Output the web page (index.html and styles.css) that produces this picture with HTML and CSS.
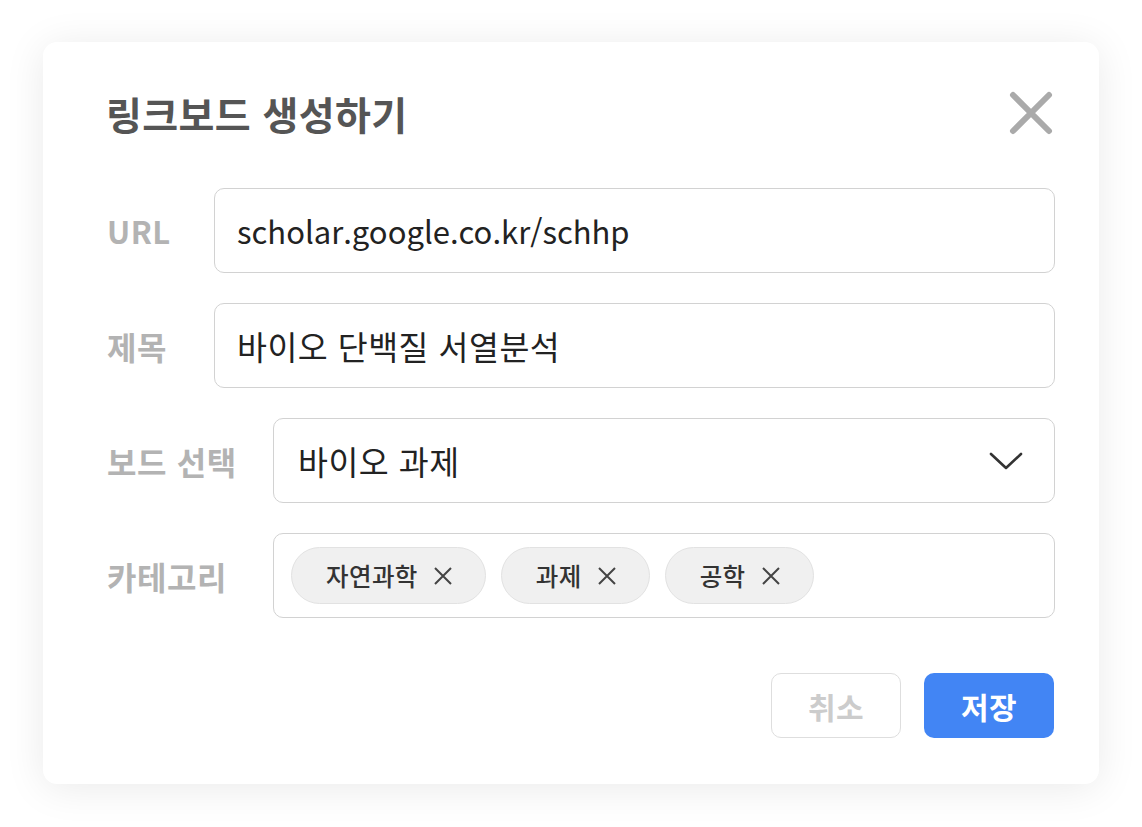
FILE: index.html
```html
<!DOCTYPE html>
<html lang="ko">
<head>
<meta charset="utf-8">
<title>링크보드 생성하기</title>
<link rel="stylesheet" href="styles.css">
</head>
<body>
<div class="stage">
  <div class="card">
    <div class="header">
      <h1 class="title">링크보드 생성하기</h1>
      <button class="close" aria-label="닫기">
        <svg width="44" height="44" viewBox="0 0 44 44"><path d="M4 4 L40 40 M40 4 L4 40" stroke="#aaaaaa" stroke-width="6" stroke-linecap="round" fill="none"/></svg>
      </button>
    </div>
    <div class="form">
      <div class="row">
        <div class="label label-short label-latin">URL</div>
        <div class="field field-latin">scholar.google.co.kr/schhp</div>
      </div>
      <div class="row">
        <div class="label label-short">제목</div>
        <div class="field">바이오 단백질 서열분석</div>
      </div>
      <div class="row">
        <div class="label label-long">보드 선택</div>
        <div class="field field-select">
          <span>바이오 과제</span>
          <svg class="chev" width="34" height="20" viewBox="0 0 34 20"><path d="M2 3 L17 17 L32 3" stroke="#333" stroke-width="2.6" fill="none" stroke-linecap="round" stroke-linejoin="round"/></svg>
        </div>
      </div>
      <div class="row">
        <div class="label label-long">카테고리</div>
        <div class="field field-tags">
          <span class="tag">자연과학<svg width="20" height="20" viewBox="0 0 20 20"><path d="M2 2 L18 18 M18 2 L2 18" stroke="#444" stroke-width="2" fill="none"/></svg></span>
          <span class="tag">과제<svg width="20" height="20" viewBox="0 0 20 20"><path d="M2 2 L18 18 M18 2 L2 18" stroke="#444" stroke-width="2" fill="none"/></svg></span>
          <span class="tag">공학<svg width="20" height="20" viewBox="0 0 20 20"><path d="M2 2 L18 18 M18 2 L2 18" stroke="#444" stroke-width="2" fill="none"/></svg></span>
        </div>
      </div>
    </div>
    <div class="actions">
      <button class="btn btn-cancel">취소</button>
      <button class="btn btn-save">저장</button>
    </div>
  </div>
</div>
</body>
</html>
```
FILE: styles.css
```css
* { box-sizing: border-box; }
html, body { margin: 0; padding: 0; background: #ffffff; }
body {
  font-family: "Noto Sans CJK KR", "Noto Sans", sans-serif;
  width: 1142px;
  height: 827px;
  overflow: hidden;
}
.stage {
  padding: 42px 43px 0 43px;
}
.card {
  width: 1056px;
  height: 742px;
  background: #fff;
  border-radius: 14px;
  box-shadow: 0 4px 40px rgba(0, 0, 0, 0.085);
  padding: 48px 44px 0 63px;
  display: flex;
  flex-direction: column;
}
.header {
  display: flex;
  align-items: center;
  justify-content: space-between;
  height: 46px;
}
.title {
  margin: 0;
  font-size: 39px;
  font-weight: 700;
  color: #555555;
  line-height: 46px;
  letter-spacing: 0.4px;
}
.close {
  border: 0;
  background: none;
  padding: 0;
  margin-right: 2px;
  width: 44px;
  height: 44px;
  display: flex;
}
.form {
  margin-top: 52px;
  display: flex;
  flex-direction: column;
  gap: 30px;
}
.row {
  display: flex;
  align-items: center;
}
.label {
  font-size: 32px;
  font-weight: 700;
  color: #b3b3b3;
  flex: none;
  letter-spacing: 0.6px;
  padding-left: 1px;
}
.label-latin {
  letter-spacing: 0.5px;
  font-size: 31px;
}
.label-short { width: 108px; }
.label-long { width: 167px; }
.field {
  flex: 1;
  height: 85px;
  border: 1.5px solid #d2d2d2;
  border-radius: 10px;
  display: flex;
  align-items: center;
  padding: 0 22px;
  font-size: 32.5px;
  color: #222;
  letter-spacing: 0.5px;
}
.field-latin {
  font-size: 31px;
  letter-spacing: 0;
}
.field-select {
  justify-content: space-between;
  padding: 0 31px 0 24px;
}
.field-tags {
  padding: 0 17px;
  gap: 15px;
}
.tag {
  height: 57px;
  border-radius: 29px;
  background: #f0f0f0;
  border: 1.5px solid #e2e2e2;
  display: inline-flex;
  align-items: center;
  gap: 15px;
  padding: 0 32px 0 34px;
  font-size: 24.5px;
  font-weight: 500;
  color: #333;
  letter-spacing: 0.4px;
}
.actions {
  margin-top: 55px;
  display: flex;
  justify-content: flex-end;
  gap: 23px;
  padding-right: 1px;
}
.btn {
  width: 130px;
  height: 65px;
  border-radius: 10px;
  font-family: inherit;
  font-size: 30px;
  font-weight: 700;
  letter-spacing: 0.5px;
  padding: 0;
}
.btn-cancel {
  background: #fff;
  border: 1.5px solid #dedede;
  color: #cccccc;
}
.btn-save {
  background: #4285f4;
  border: 0;
  color: #fff;
}
```
